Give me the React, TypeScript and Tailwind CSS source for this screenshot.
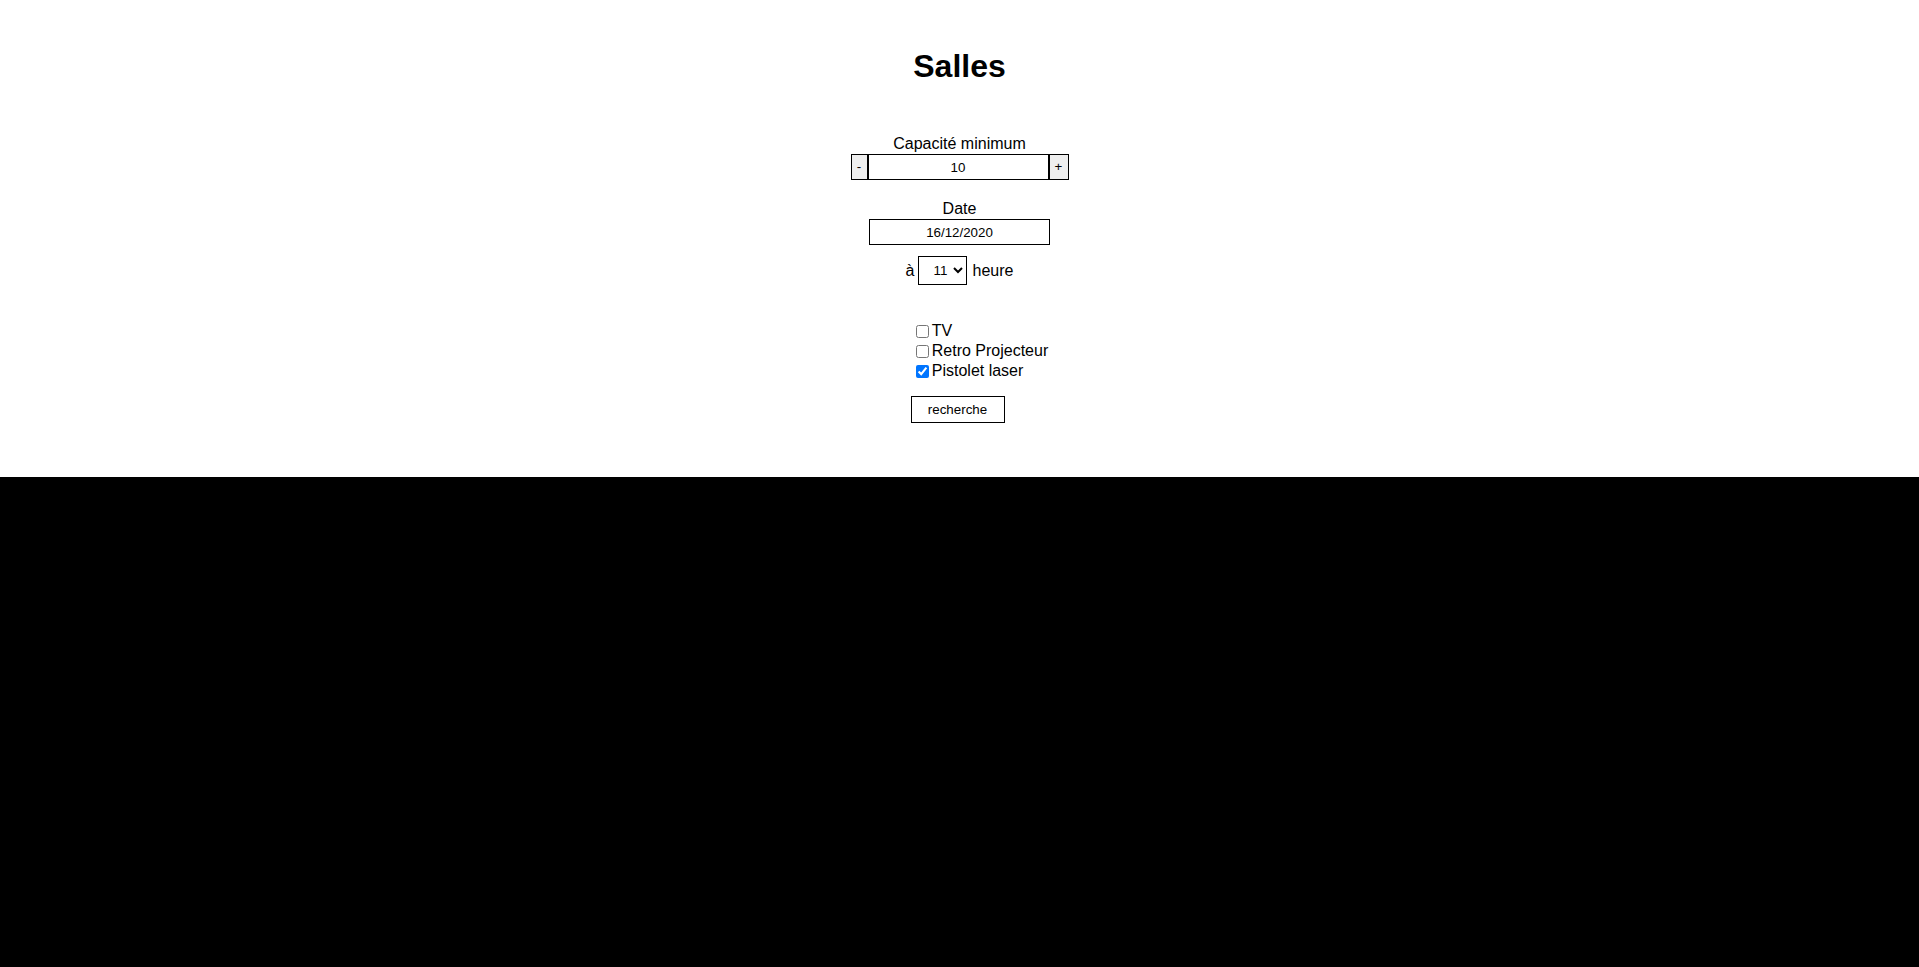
import { useState } from 'react';

const ctrlCls =
  'box-border border border-black text-[13.33px] leading-none text-black outline-none';

export default function App() {
  const [capacite, setCapacite] = useState(10);
  const [heure, setHeure] = useState('11');
  const [equip, setEquip] = useState({ tv: false, retro: false, laser: true });

  const hours = Array.from({ length: 24 }, (_, i) => String(i));

  return (
    <div className="min-h-screen bg-black font-['Liberation_Sans',Arial,sans-serif] text-black">
      <div className="flex h-[477px] flex-col items-center bg-white">
        <h1 className="mt-[48px] text-[32px] font-bold leading-[37px]">Salles</h1>

        {/* Capacité */}
        <label className="mt-[50px] text-base leading-[18px]">Capacité minimum</label>
        <div className="mt-[1px] flex h-[26px]">
          <button
            onClick={() => setCapacite((c) => Math.max(0, c - 1))}
            className={ctrlCls + ' w-[17px] bg-[#efefef]'}
          >
            -
          </button>
          <input
            value={capacite}
            onChange={(e) => setCapacite(Number(e.target.value) || 0)}
            className={ctrlCls + ' w-[181px] bg-white text-center'}
          />
          <button
            onClick={() => setCapacite((c) => c + 1)}
            className={ctrlCls + ' w-[20px] bg-[#efefef]'}
          >
            +
          </button>
        </div>

        {/* Date */}
        <label className="mt-[20px] text-base leading-[18px]">Date</label>
        <input
          defaultValue="16/12/2020"
          className={ctrlCls + ' mt-[1px] h-[26px] w-[181px] bg-white text-center'}
        />

        <div className="mt-[11px] flex h-[29px] items-center gap-[4px] text-base">
          <span>à</span>
          <select
            value={heure}
            onChange={(e) => setHeure(e.target.value)}
            className={ctrlCls + ' h-[29px] w-[49px] bg-white pl-[10px]'}
          >
            {hours.map((h) => (
              <option key={h} value={h}>
                {h}
              </option>
            ))}
          </select>
          <span className="ml-[1px]">heure</span>
        </div>

        {/* Équipements */}
        <ul className="mt-[36px] pl-[40px] text-base">
          {[
            { k: 'tv', label: 'TV' },
            { k: 'retro', label: 'Retro Projecteur' },
            { k: 'laser', label: 'Pistolet laser' },
          ].map(({ k, label }) => (
            <li key={k} className="flex h-[20px] items-center">
              <input
                type="checkbox"
                checked={equip[k as keyof typeof equip]}
                onChange={(e) => setEquip({ ...equip, [k]: e.target.checked })}
                className="ml-[5px] mr-[3px] h-[13px] w-[13px]"
              />
              <span className="leading-[18px]">{label}</span>
            </li>
          ))}
        </ul>

        <button className={ctrlCls + ' mr-[4px] mt-[15px] h-[27px] w-[94px] bg-white'}>recherche</button>
      </div>
    </div>
  );
}
